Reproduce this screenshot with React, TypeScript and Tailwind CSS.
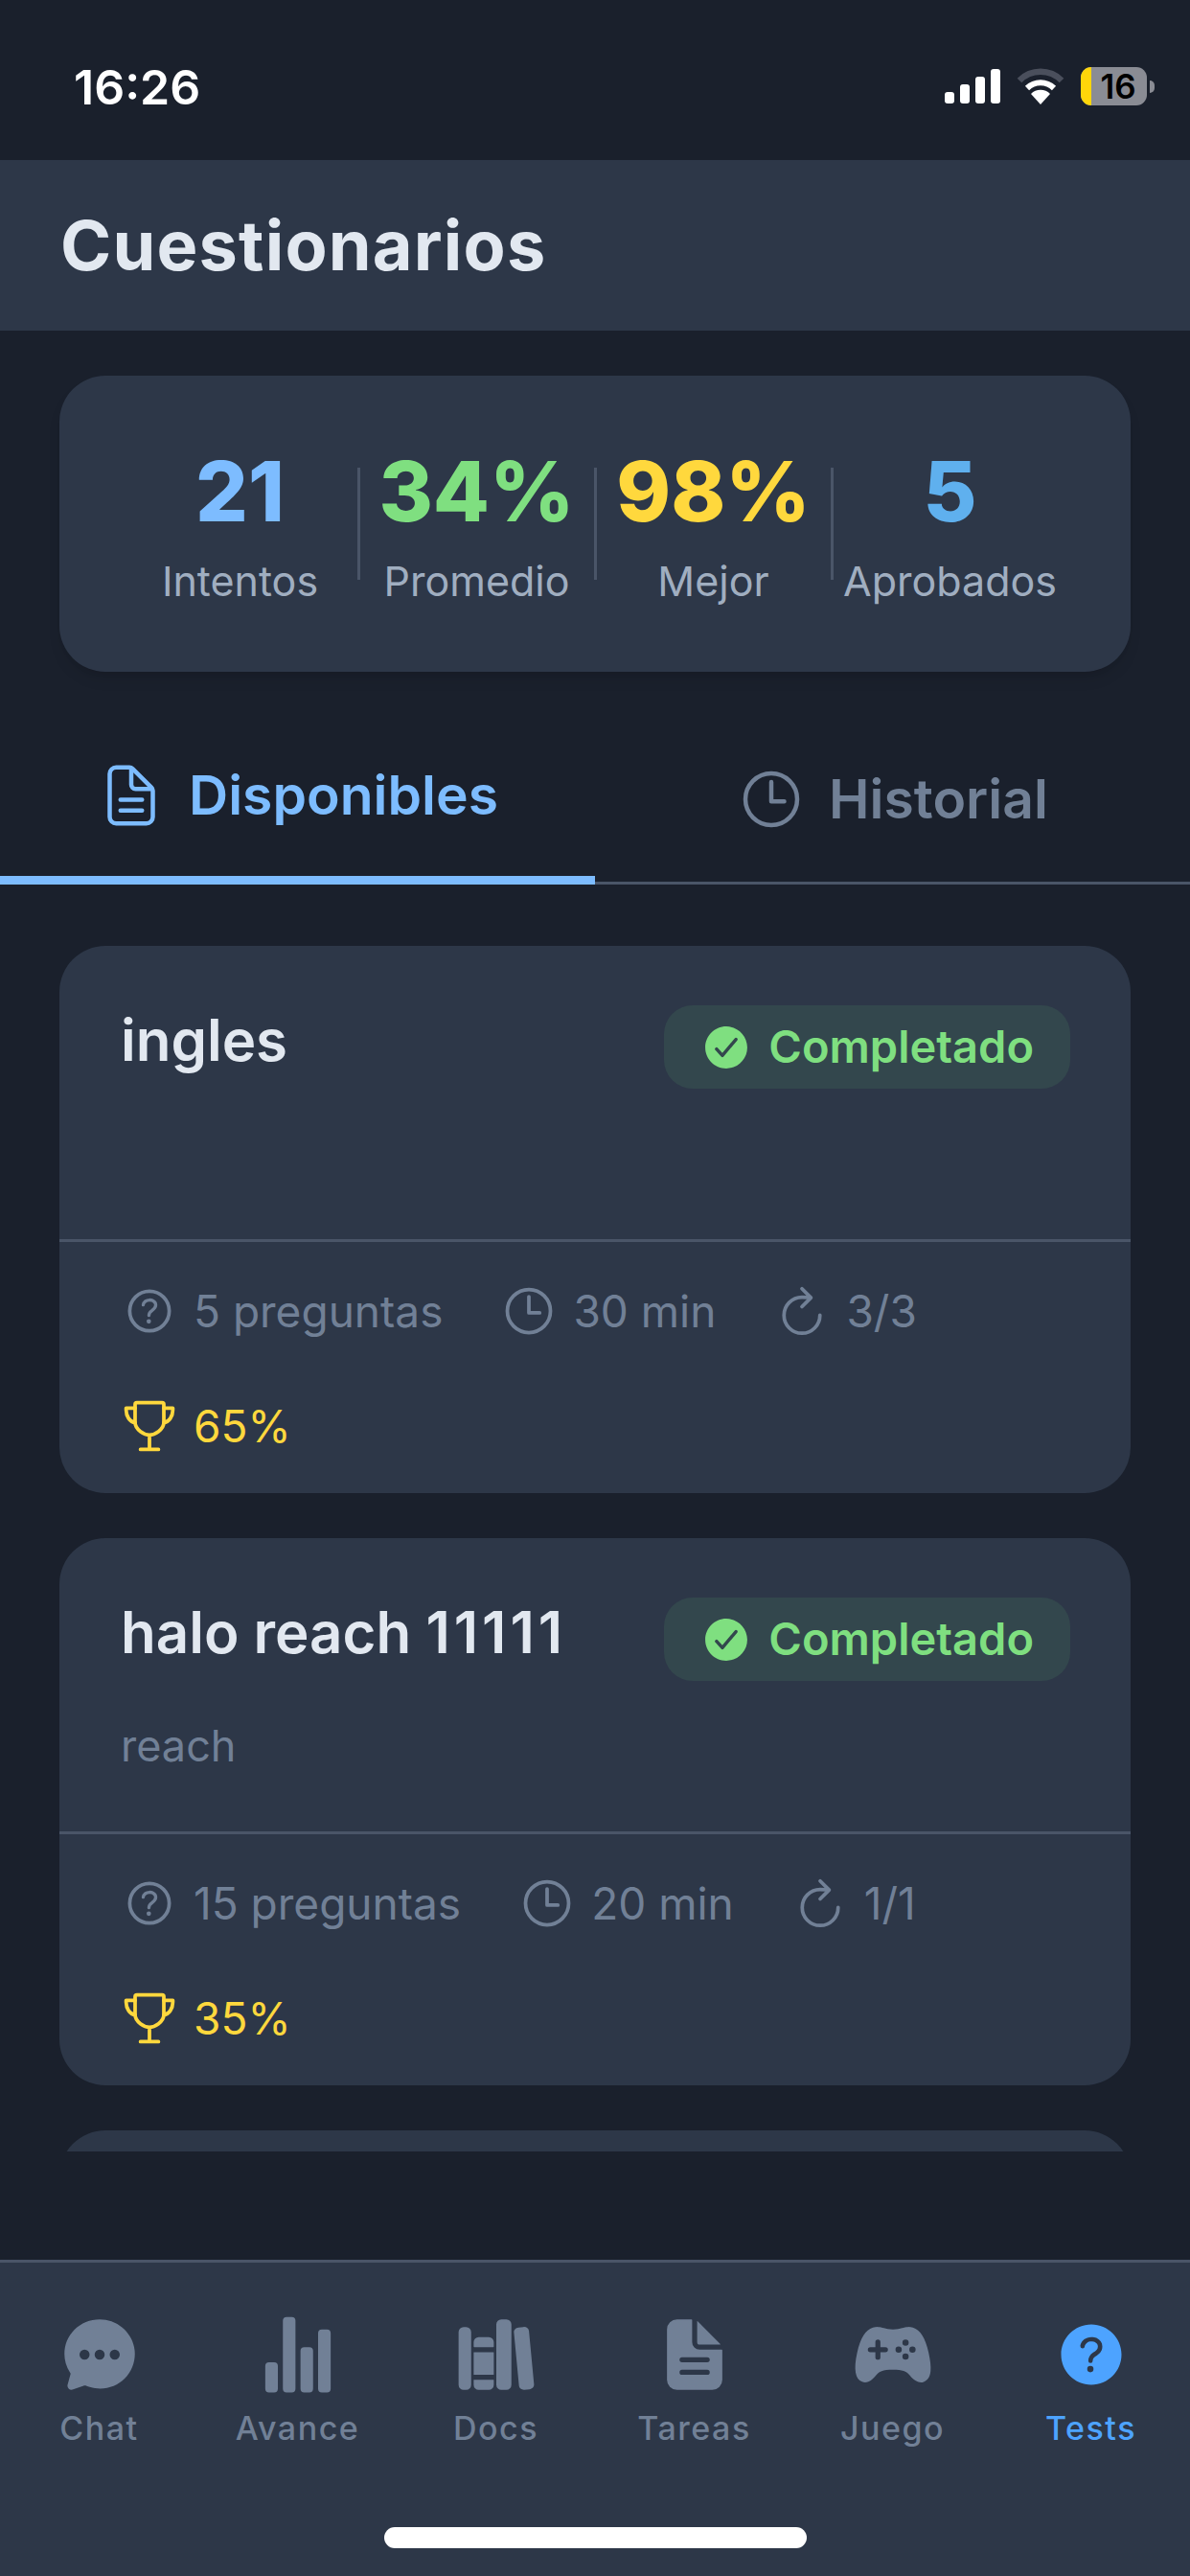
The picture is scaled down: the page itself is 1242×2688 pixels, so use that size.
import React from 'react';
import {
  IoChatbubbleEllipses,
  IoCheckmarkCircle,
  IoDocumentText,
  IoDocumentTextOutline,
  IoGameController,
  IoHelpCircle,
  IoHelpCircleOutline,
  IoLibrary,
  IoRefreshOutline,
  IoStatsChart,
  IoTimeOutline,
  IoTrophyOutline,
} from 'react-icons/io5';

const stats = [
  { value: '21', label: 'Intentos', color: 'text-[#7dbcff]' },
  { value: '34%', label: 'Promedio', color: 'text-[#7fdf80]' },
  { value: '98%', label: 'Mejor', color: 'text-[#ffd83d]' },
  { value: '5', label: 'Aprobados', color: 'text-[#5fb0ee]' },
];

const quizzes = [
  { title: 'ingles', digits: '', subtitle: '', questions: '5 preguntas', time: '30 min', tries: '3/3', score: '65%' },
  { title: 'halo reach ', digits: '11111', subtitle: 'reach', questions: '15 preguntas', time: '20 min', tries: '1/1', score: '35%' },
];

const tabs = [
  { label: 'Chat', Icon: IoChatbubbleEllipses },
  { label: 'Avance', Icon: IoStatsChart },
  { label: 'Docs', Icon: IoLibrary },
  { label: 'Tareas', Icon: IoDocumentText },
  { label: 'Juego', Icon: IoGameController },
  { label: 'Tests', Icon: IoHelpCircle, active: true },
];

const StatusBar = () => (
  <div className="h-[167px] shrink-0 flex items-start justify-between pl-[77px] pr-[37px] pt-[64px]">
    <span className="text-[50px] leading-[54px] font-semibold text-white">16:26</span>
    <div className="flex items-center gap-[17px] pt-[6px]">
      <svg width="58" height="36" viewBox="0 0 58 36" fill="#fff">
        <rect x="0" y="24" width="10" height="12" rx="3" />
        <rect x="16" y="16" width="10" height="20" rx="3" />
        <rect x="32" y="8" width="10" height="28" rx="3" />
        <rect x="48" y="0" width="10" height="36" rx="3" />
      </svg>
      <svg width="50" height="38" viewBox="0 0 50 38" fill="none">
        <path d="M3 13 A31 31 0 0 1 47 13" stroke="#4a4f5c" strokeWidth="6.5" />
        <path d="M11 21 A20 20 0 0 1 39 21" stroke="#fff" strokeWidth="6" />
        <path d="M25 38 L15 27 A14 14 0 0 1 35 27 Z" fill="#fff" />
      </svg>
      <div className="flex items-center gap-[3px]">
        <div className="relative w-[69px] h-[40px] rounded-[11px] bg-[#8a8c94] overflow-hidden flex items-center justify-center">
          <div className="absolute left-0 top-0 bottom-0 w-[11px] bg-[#ffd60a]" />
          <span className="relative text-[35px] leading-none font-semibold text-black pl-[9px]">16</span>
        </div>
        <div className="w-[5px] h-[13px] rounded-r-full bg-[#8a8c94]" />
      </div>
    </div>
  </div>
);

const StatsCard = () => (
  <div className="h-[309px] rounded-[48px] bg-[#2d3748] flex items-start px-[65px] pt-[73px] shadow-lg">
    {stats.map((s, i) => (
      <div key={s.label} className="relative flex-1 flex flex-col items-center">
        <span className={`text-[86px] leading-[96px] font-extrabold ${s.color}`}>{s.value}</span>
        <span className="mt-[19px] text-[43px] leading-[52px] text-[#a0aec0]">{s.label}</span>
        {i < 3 && <div className="absolute -right-[2px] top-[23px] w-[3px] h-[117px] bg-[#4a5568]" />}
      </div>
    ))}
  </div>
);

const Tabs = () => (
  <div className="mt-[46px] flex h-[176px] shrink-0 border-b-[3px] border-[#4a5568]">
    <div className="relative flex-1 flex items-center justify-center gap-[24px] pb-[8px]">
      <IoDocumentTextOutline className="w-[72px] h-[72px] text-[#7dbcff]" />
      <span className="text-[57px] font-semibold text-[#7dbcff]">Disponibles</span>
      <div className="absolute left-0 right-0 -bottom-[3px] h-[9px] bg-[#7dbcff]" />
    </div>
    <div className="flex-1 flex items-center justify-center gap-[24px]">
      <IoTimeOutline className="w-[72px] h-[72px] text-[#718096]" />
      <span className="text-[57px] font-semibold text-[#718096]">Historial</span>
    </div>
  </div>
);

const Meta = ({ icon, text }: { icon: React.ReactNode; text: string }) => (
  <div className="flex items-center gap-[16px]">
    {icon}
    <span className="text-[46px] leading-[54px] text-[#718096]">{text}</span>
  </div>
);

const QuizCard = ({ q }: { q: (typeof quizzes)[number] }) => (
  <div className="h-[571px] shrink-0 rounded-[48px] bg-[#2d3748] overflow-hidden">
    <div className="h-[309px] pl-[64px] pr-[63px] pt-[62px] border-b-[3px] border-[#4a5568]">
      <div className="flex items-start justify-between">
        <span className="text-[60px] leading-[72px] font-semibold text-[#e2e8f0] whitespace-pre">
          {q.title}
          <span className="tracking-[4px]">{q.digits}</span>
        </span>
        <div className="h-[87px] px-[38px] rounded-[30px] bg-[#33474d] flex items-center gap-[17px]">
          <IoCheckmarkCircle className="w-[54px] h-[54px] text-[#7fdf80]" />
          <span className="text-[47px] font-semibold text-[#7fdf80]">Completado</span>
        </div>
      </div>
      <div className="mt-[42px] text-[45px] leading-[52px] text-[#718096]">{q.subtitle}</div>
    </div>
    <div className="pl-[64px] pr-[63px] pt-[42px]">
      <div className="flex items-center gap-[60px]">
        <Meta icon={<IoHelpCircleOutline className="w-[60px] h-[60px] text-[#718096]" />} text={q.questions} />
        <Meta icon={<IoTimeOutline className="w-[60px] h-[60px] text-[#718096]" />} text={q.time} />
        <Meta icon={<IoRefreshOutline className="w-[60px] h-[60px] text-[#718096]" />} text={q.tries} />
      </div>
      <div className="mt-[60px] flex items-center gap-[16px]">
        <IoTrophyOutline className="w-[60px] h-[60px] text-[#ffd83d]" />
        <span className="text-[46px] leading-[54px] text-[#ffd83d]">{q.score}</span>
      </div>
    </div>
  </div>
);

const BottomNav = () => (
  <div className="relative h-[330px] shrink-0 bg-[#2d3748] border-t-[3px] border-[#4a5568] flex items-start pt-[54px]">
    {tabs.map(({ label, Icon, active }) => (
      <div key={label} className="flex-1 flex flex-col items-center">
        <Icon className={`w-[84px] h-[84px] ${active ? 'text-[#4da3ff]' : 'text-[#718096]'}`} />
        <span
          className={`mt-[14px] text-[34px] leading-[42px] font-medium tracking-[1.5px] ${active ? 'text-[#4da3ff]' : 'text-[#718096]'}`}
        >
          {label}
        </span>
      </div>
    ))}
    <div className="absolute left-[401px] top-[276px] w-[441px] h-[22px] rounded-full bg-white" />
  </div>
);

export default function App() {
  return (
    <div className="w-[1242px] h-[2688px] bg-[#1a202c] flex flex-col font-['Inter',sans-serif]">
      <StatusBar />
      <div className="h-[178px] shrink-0 bg-[#2d3748] flex items-center px-[63px]">
        <h1 className="text-[72px] leading-none font-bold tracking-[1.2px] text-[#e2e8f0]">Cuestionarios</h1>
      </div>
      <div className="px-[62px] pt-[47px] shrink-0">
        <StatsCard />
      </div>
      <Tabs />
      <div className="mt-[64px] h-[1258px] shrink-0 overflow-hidden px-[62px] flex flex-col gap-[47px]">
        {quizzes.map((q) => (
          <QuizCard key={q.title} q={q} />
        ))}
        <div className="h-[571px] shrink-0 rounded-[48px] bg-[#2d3748]" />
      </div>
      <div className="flex-1" />
      <BottomNav />
    </div>
  );
}
